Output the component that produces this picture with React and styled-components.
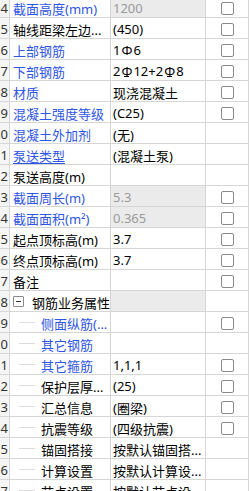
import React from "react";
import styled, { createGlobalStyle, css } from "styled-components";

const GlobalStyle = createGlobalStyle`
  html, body {
    margin: 0;
    padding: 0;
    background: #fff;
    overflow: hidden;
  }
  body {
    font-family: "Noto Sans", "Noto Sans CJK SC", sans-serif;
    font-size: 13px;
    color: #000;
  }
`;

const GridStyle = styled.div`
  width: 249px;
  margin-top: -3px;
`;

const RowStyle = styled.div`
  display: grid;
  grid-template-columns: 10px 101px 95px 43px;
  height: 21px;
`;

const cellBase = css`
  box-sizing: border-box;
  height: 21px;
  border-right: 1px solid #d6d6d6;
  border-bottom: 1px solid #d6d6d6;
  display: flex;
  align-items: center;
  overflow: hidden;
  white-space: nowrap;
  padding-top: 2px;
`;

const NumCell = styled.div`
  ${cellBase}
  justify-content: flex-end;
  background: #f5f5f5;
  color: #333;
  padding-right: 1px;
`;

const NameCell = styled.div`
  ${cellBase}
  position: relative;
  padding-left: ${({ $child, $group }) => ($child ? 31 : $group ? 22 : 3)}px;
  color: ${({ $blue }) => ($blue ? "#2f55e4" : "#000")};

  span {
    ${({ $underline }) =>
      $underline &&
      css`
        text-decoration: underline;
        text-underline-offset: 2px;
      `}
  }
`;

const TreeLine = styled.i`
  position: absolute;
  left: 9px;
  top: 10px;
  width: 16px;
  height: 1px;
  background: #dcdcdc;
`;

const Expander = styled.i`
  position: absolute;
  left: 3px;
  top: 5px;
  width: 11px;
  height: 11px;
  box-sizing: border-box;
  border: 1px solid #8c8c8c;
  border-radius: 1px;
  background: #fff;

  &::after {
    content: "";
    position: absolute;
    left: 2px;
    top: 4px;
    width: 5px;
    height: 1px;
    background: #333;
  }
`;

const ValueCell = styled.div`
  ${cellBase}
  padding-left: 2px;
  background: ${({ $muted }) => ($muted ? "#ebebeb" : "#fff")};
  color: ${({ $muted }) => ($muted ? "#9a9a9a" : "#000")};
`;

const CheckCell = styled.div`
  ${cellBase}
  justify-content: center;
  padding-top: 3px;
`;

const Box = styled.span`
  display: block;
  width: 13px;
  height: 13px;
  box-sizing: border-box;
  border: 1px solid #8a8a8a;
  border-radius: 2px;
  background: #fff;
`;

const RebarStyle = styled.span`
  position: relative;
  display: inline-block;
  margin: 0 1px;

  ${({ $grade }) =>
    $grade === 3 &&
    css`
      &::after {
        content: "";
        position: absolute;
        left: 50%;
        bottom: 3px;
        width: 5px;
        height: 1px;
        margin-left: -2.5px;
        background: #000;
      }
    `}
`;

const Rebar = ({ grade = 1 }) => <RebarStyle $grade={grade}>Φ</RebarStyle>;

const rows = [
  { n: 14, name: "截面高度(mm)", blue: true, value: "1200", muted: true, check: true },
  { n: 15, name: "轴线距梁左边...", value: "(450)", check: true },
  {
    n: 16,
    name: "上部钢筋",
    blue: true,
    value: (
      <>
        1<Rebar />6
      </>
    ),
    check: true,
  },
  {
    n: 17,
    name: "下部钢筋",
    blue: true,
    value: (
      <>
        2<Rebar grade={3} />12+2<Rebar grade={3} />8
      </>
    ),
    check: true,
  },
  { n: 18, name: "材质", blue: true, value: "现浇混凝土", check: true },
  { n: 19, name: "混凝土强度等级", blue: true, value: "(C25)", check: true },
  { n: 20, name: "混凝土外加剂", blue: true, value: "(无)" },
  { n: 21, name: "泵送类型", blue: true, underline: true, value: "(混凝土泵)" },
  { n: 22, name: "泵送高度(m)", value: "" },
  { n: 23, name: "截面周长(m)", blue: true, value: "5.3", muted: true, check: true },
  { n: 24, name: "截面面积(m²)", blue: true, value: "0.365", muted: true, check: true },
  { n: 25, name: "起点顶标高(m)", value: "3.7", check: true },
  { n: 26, name: "终点顶标高(m)", value: "3.7", check: true },
  { n: 27, name: "备注", value: "", check: true },
  { n: 28, name: "钢筋业务属性", group: true, value: "", muted: true },
  { n: 29, name: "侧面纵筋(...", blue: true, child: true, value: "", check: true },
  { n: 30, name: "其它钢筋", blue: true, child: true, value: "" },
  { n: 31, name: "其它箍筋", blue: true, child: true, value: "1,1,1", check: true },
  { n: 32, name: "保护层厚...", child: true, value: "(25)", check: true },
  { n: 33, name: "汇总信息", child: true, value: "(圈梁)", check: true },
  { n: 34, name: "抗震等级", child: true, value: "(四级抗震)", check: true },
  { n: 35, name: "锚固搭接", child: true, value: "按默认锚固搭..." },
  { n: 36, name: "计算设置", child: true, value: "按默认计算设..." },
  { n: 37, name: "节点设置", child: true, value: "按默认节点设..." },
];

const PropertyRow = ({ row }) => (
  <RowStyle>
    <NumCell>{row.n % 10}</NumCell>
    <NameCell
      $blue={row.blue}
      $child={row.child}
      $group={row.group}
      $underline={row.underline}
    >
      {row.child && <TreeLine />}
      {row.group && <Expander />}
      <span>{row.name}</span>
    </NameCell>
    <ValueCell $muted={row.muted}>{row.value}</ValueCell>
    <CheckCell>{row.check && <Box />}</CheckCell>
  </RowStyle>
);

const App = () => (
  <>
    <GlobalStyle />
    <GridStyle>
      {rows.map((row) => (
        <PropertyRow key={row.n} row={row} />
      ))}
    </GridStyle>
  </>
);

export default App;
